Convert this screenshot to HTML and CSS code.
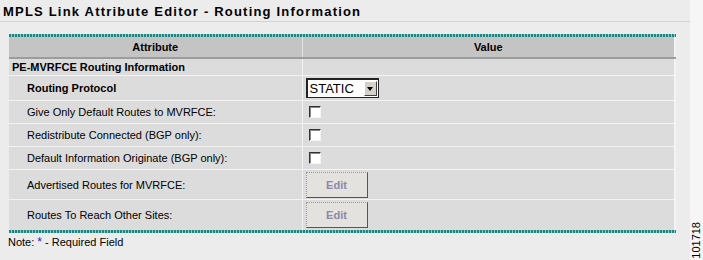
FILE: index.html
```html
<!DOCTYPE html>
<html lang="en">
<head>
  <meta charset="UTF-8">
  <title>MPLS Link Attribute Editor - Routing Information</title>
  <link rel="stylesheet" href="styles.css">
</head>
<body>
  <div class="frame">
    <div class="page">
      <div class="title">MPLS Link Attribute Editor - Routing Information</div>

      <div class="panel">
        <div class="rule"></div>
        <table class="attr-table">
          <colgroup>
            <col class="col-attr">
            <col class="col-value">
          </colgroup>
          <thead>
            <tr>
              <th class="th-attr">Attribute</th>
              <th>Value</th>
            </tr>
          </thead>
          <tbody>
            <tr class="row-section">
              <td class="section">PE-MVRFCE Routing Information</td>
              <td></td>
            </tr>
            <tr class="row-select">
              <td class="label strong">Routing Protocol</td>
              <td>
                <div class="select">
                  <span class="select-value">STATIC</span>
                  <span class="select-arrow"></span>
                </div>
              </td>
            </tr>
            <tr class="row-check">
              <td class="label">Give Only Default Routes to MVRFCE:</td>
              <td><span class="check"></span></td>
            </tr>
            <tr class="row-check">
              <td class="label">Redistribute Connected (BGP only):</td>
              <td><span class="check"></span></td>
            </tr>
            <tr class="row-check">
              <td class="label">Default Information Originate (BGP only):</td>
              <td><span class="check"></span></td>
            </tr>
            <tr class="row-button">
              <td class="label">Advertised Routes for MVRFCE:</td>
              <td><button class="edit-btn" disabled>Edit</button></td>
            </tr>
            <tr class="row-button last">
              <td class="label">Routes To Reach Other Sites:</td>
              <td><button class="edit-btn" disabled>Edit</button></td>
            </tr>
          </tbody>
        </table>
        <div class="rule"></div>
      </div>

      <p class="note">Note: <span class="req">*</span> - Required Field</p>
    </div>

    <div class="fig-id"><span>101718</span></div>
  </div>
</body>
</html>
```

FILE: styles.css
```css
:root{
  --page-bg: #ececec;
  --outer-bg: #f6f6f6;
  --row-bg: #dcdcdc;
  --head-bg: #c4c4c4;
  --line: #f3f3f3;
  --teal: #23857f;
  --teal-light: #8fcbc6;
}

body{
  margin: 0;
  background-color: var(--outer-bg);
  font-family: "Liberation Sans", Arial, sans-serif;
  color: #000;
}

.frame{
  display: flex;
  height: 260px;
  overflow: hidden;
}

.page{
  width: 690px;
  background-color: var(--page-bg);
}

.title{
  height: 22px;
  box-sizing: border-box;
  padding: 4px 0 0 3px;
  border-bottom: 1px solid #d2d2d2;
  font-size: 13px;
  line-height: 16px;
  font-weight: bold;
  letter-spacing: 1.2px;
}

.panel{
  width: 667px;
  margin: 12px 0 0 9px;
}

.rule{
  height: 3px;
  background: repeating-linear-gradient(90deg, var(--teal) 0 2px, var(--teal-light) 2px 3px);
}

.attr-table{
  width: 100%;
  border-collapse: collapse;
  table-layout: fixed;
  border-right: 2px solid var(--line);
  font-size: 11px;
}
.col-attr{ width: 293px; }

.attr-table th{
  height: 20px;
  padding: 0;
  background-color: var(--head-bg);
  border-bottom: 2px solid #9c9c9c;
  font-size: 11px;
  font-weight: bold;
  text-align: center;
}
.attr-table .th-attr{
  border-right: 1px solid #e2e2e2;
}

.attr-table td{
  padding: 0;
  background-color: var(--row-bg);
  border-top: 1px solid var(--line);
  vertical-align: middle;
}
.attr-table td:first-child{
  border-right: 1px solid var(--line);
}
.attr-table td:last-child{
  padding-left: 3px;
}

.row-section td{ height: 16px; }
.row-select td{ height: 24px; }
.row-check td{ height: 22px; }
.row-button td{ height: 29px; }
.row-button.last td{ height: 30px; }

.section{
  padding-left: 3px !important;
  font-weight: bold;
}
.label{
  padding-left: 18px !important;
}
.strong{
  font-weight: bold;
}

.select{
  display: flex;
  align-items: center;
  width: 70px;
  height: 17px;
  background-color: #fff;
  border: 1px solid #222;
  border-top-width: 2px;
  border-left-width: 2px;
}
.select-value{
  flex: 1;
  padding-left: 2px;
  font-size: 13px;
  line-height: 17px;
}
.select-arrow{
  position: relative;
  width: 11px;
  height: 13px;
  margin-right: 1px;
  background-color: #d4d0c8;
  border: 1px solid;
  border-color: #fff #404040 #404040 #fff;
}
.select-arrow::after{
  content: "";
  position: absolute;
  left: 2px;
  top: 5px;
  border-left: 3.5px solid transparent;
  border-right: 3.5px solid transparent;
  border-top: 4px solid #000;
}

.check{
  display: block;
  width: 10px;
  height: 10px;
  margin-left: 3px;
  background-color: #fff;
  border: 1px solid;
  border-color: #333 #f4f4f4 #f4f4f4 #333;
  box-shadow: inset 1px 1px 0 #888;
}

.edit-btn{
  display: block;
  width: 62px;
  height: 26px;
  padding: 0;
  background-color: #e4e2de;
  border: 1px dotted #9a9a9a;
  border-right: 1px solid #555;
  border-bottom: 1px solid #555;
  font-family: "Liberation Sans", Arial, sans-serif;
  font-size: 11px;
  font-weight: bold;
  color: #8a89ab;
}

.note{
  margin: 3px 0 0 8px;
  font-size: 11px;
  line-height: 13px;
}
.req{
  color: #1f1fc0;
  font-size: 12px;
}

.fig-id{
  flex: 1;
  display: flex;
  align-items: flex-end;
  justify-content: center;
  padding-bottom: 1px;
}
.fig-id span{
  writing-mode: vertical-rl;
  transform: rotate(180deg);
  font-size: 11px;
  line-height: 11px;
}
```
